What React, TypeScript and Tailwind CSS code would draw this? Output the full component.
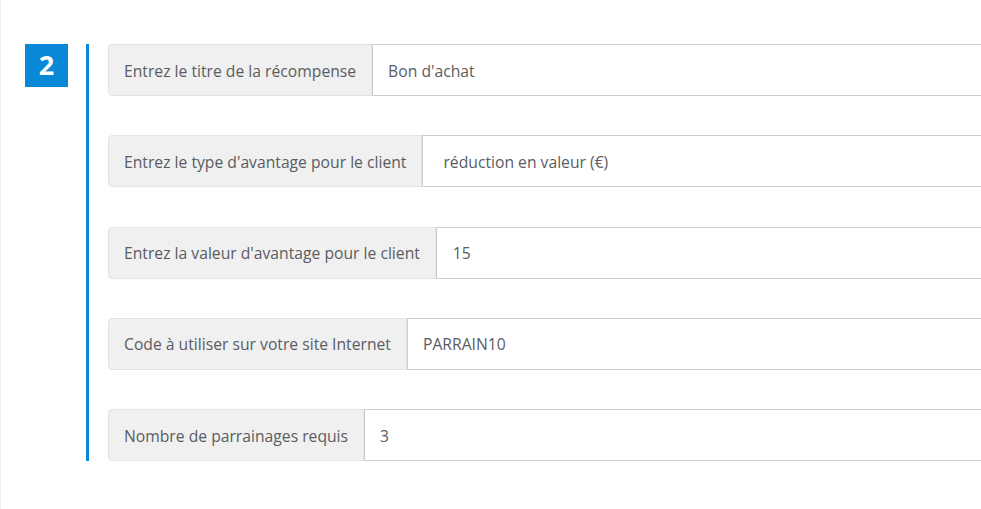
const rows = [
  { label: "Entrez le titre de la récompense", value: "Bon d'achat", pad: "pl-[15px]" },
  { label: "Entrez le type d'avantage pour le client", value: "réduction en valeur (€)", pad: "pl-[20px]" },
  { label: "Entrez la valeur d'avantage pour le client", value: "15", pad: "pl-[16px]" },
  { label: "Code à utiliser sur votre site Internet", value: "PARRAIN10", pad: "pl-[15px]" },
  { label: "Nombre de parrainages requis", value: "3", pad: "pl-[15px]" },
];

export default function App() {
  return (
    <div
      className="w-[981px] h-[509px] overflow-hidden bg-white border-l border-[#ececec] pt-[44px] pl-6 flex"
      style={{ fontFamily: '"Open Sans", "Noto Sans", sans-serif' }}
    >
      <div className="w-[43px] h-[43px] bg-[#0a88d8] text-white font-bold text-[27px] flex items-center justify-center shrink-0">
        2
      </div>
      <div className="ml-[18px] border-l-[3px] border-[#0a88d8] pl-[19px] flex flex-col gap-[39.25px] self-start shrink-0">
        {rows.map((r) => (
          <div key={r.label} className="flex h-[52px] w-[900px] text-[15.7px] text-[#5a5c62]">
            <div className="bg-[#f0f0f0] border border-[#e3e3e3] rounded-l-[4px] px-[15px] pt-[3px] flex items-center whitespace-nowrap">
              {r.label}
            </div>
            <div className={`flex-1 border border-[#c9ced6] bg-white pt-[3px] flex items-center ${r.pad}`}>
              {r.value}
            </div>
          </div>
        ))}
      </div>
    </div>
  );
}
